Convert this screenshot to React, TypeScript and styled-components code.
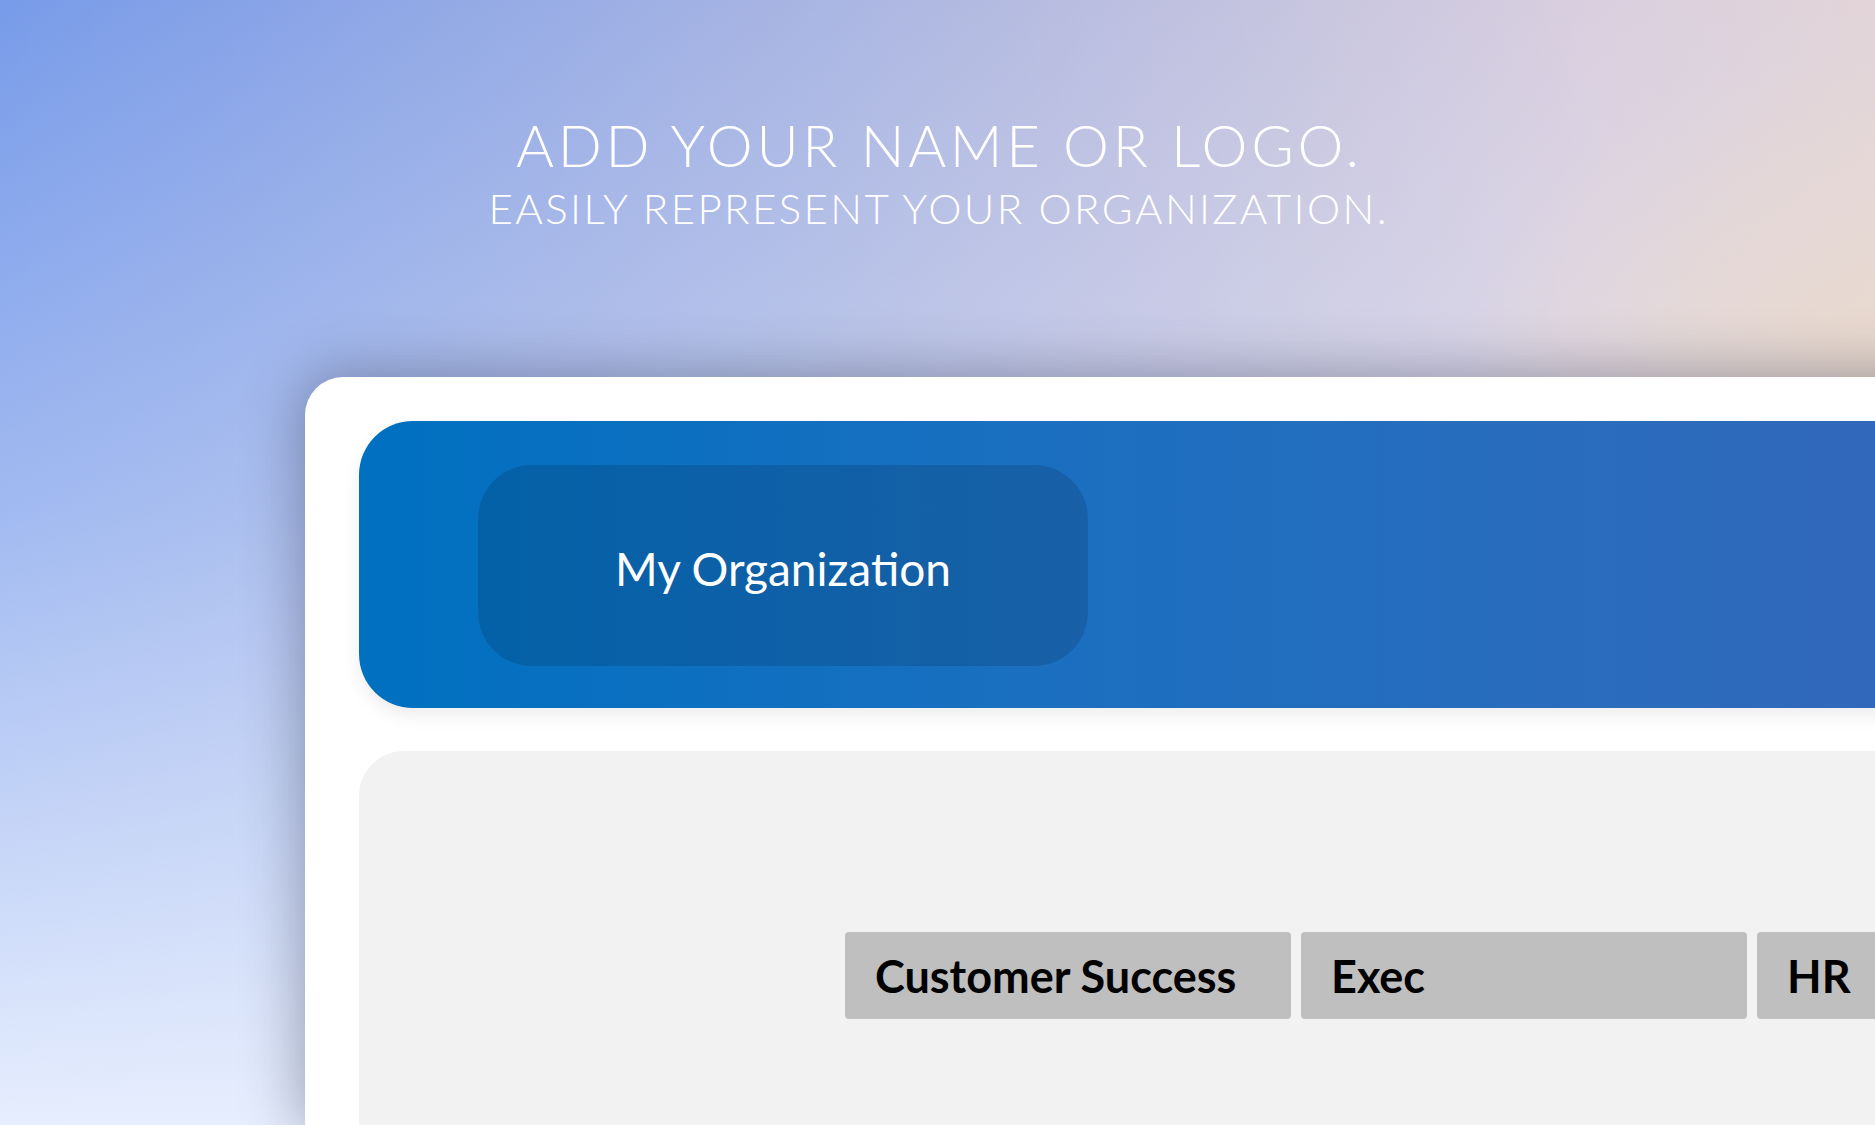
import React from "react";
import styled, { createGlobalStyle } from "styled-components";

const GlobalStyle = createGlobalStyle`
  html, body {
    margin: 0;
    padding: 0;
    overflow: hidden;
  }
  body {
    font-family: "Lato", "Liberation Sans", sans-serif;
  }
`;

const departments = ["Customer Success", "Exec", "HR"];

const App = () => {
  return (
    <>
      <GlobalStyle />
      <Page>
        <Heading>
          <Title>ADD YOUR NAME OR LOGO.</Title>
          <Subtitle>EASILY REPRESENT YOUR ORGANIZATION.</Subtitle>
        </Heading>
        <Card>
          <Banner>
            <OrgBox>
              <OrgName>My Organization</OrgName>
            </OrgBox>
          </Banner>
          <Panel>
            <TabRow>
              {departments.map(name => (
                <Tab key={name}>{name}</Tab>
              ))}
            </TabRow>
          </Panel>
        </Card>
      </Page>
    </>
  );
};

export default App;

const Page = styled.div`
  width: 1875px;
  height: 1125px;
  overflow: hidden;
  display: flex;
  flex-direction: column;
  background:
    radial-gradient(ellipse 420px 360px at 100% 36%, rgba(234, 216, 200, 0.9), rgba(234, 216, 200, 0) 100%),
    linear-gradient(to bottom, rgba(236, 242, 255, 0) 0%, rgba(236, 242, 255, 0.35) 45%, rgba(236, 242, 255, 0.95) 100%),
    linear-gradient(to right, #789be9 0%, #9fb0e4 35%, #bcbfe0 60%, #d9cfdf 85%, #e2d4d8 100%);
`;
const Heading = styled.div`
  padding-top: 110px;
  display: flex;
  flex-direction: column;
  align-items: center;
  color: #ffffff;
  font-family: "Lato", "Liberation Sans", sans-serif;
  font-weight: 300;
`;
const Title = styled.div`
  font-size: 58px;
  line-height: 70px;
  letter-spacing: 3.7px;
  margin-right: -3.7px;
`;
const Subtitle = styled.div`
  font-size: 42px;
  line-height: 56px;
  letter-spacing: 2.4px;
  margin-right: -2.4px;
`;
const Card = styled.div`
  margin-top: 141px;
  margin-left: 305px;
  width: 1700px;
  flex: 1;
  box-sizing: border-box;
  padding: 44px 0 0 54px;
  display: flex;
  flex-direction: column;
  gap: 43px;
  background: #ffffff;
  border-radius: 38px 0 0 0;
  box-shadow: 0 0 55px 6px rgba(45, 50, 75, 0.38);
`;
const Banner = styled.div`
  box-sizing: border-box;
  height: 287px;
  padding: 44px 0 0 119px;
  border-radius: 54px 0 0 54px;
  background: linear-gradient(to right, #0070c0 0%, #1a6fc0 40%, #2a6cbd 75%, #3566ba 100%);
  box-shadow: 0 8px 18px rgba(0, 0, 0, 0.07);
`;
const OrgBox = styled.div`
  width: 610px;
  height: 201px;
  border-radius: 54px;
  background: rgba(0, 0, 0, 0.13);
  display: flex;
  justify-content: center;
  align-items: center;
`;
const OrgName = styled.span`
  color: #ffffff;
  font-family: "Lato", "Open Sans", sans-serif;
  font-size: 46px;
  font-weight: 400;
  padding-top: 6px;
`;
const Panel = styled.div`
  flex: 1;
  box-sizing: border-box;
  padding: 181px 0 0 486px;
  background: #f2f2f2;
  border-radius: 45px 0 0 0;
`;
const TabRow = styled.div`
  display: flex;
  gap: 10px;
`;
const Tab = styled.div`
  width: 446px;
  height: 87px;
  flex-shrink: 0;
  box-sizing: border-box;
  padding-left: 30px;
  display: flex;
  align-items: center;
  background: #bfbfbf;
  border-radius: 4px;
  color: #000000;
  font-family: "Lato", "Liberation Sans", sans-serif;
  font-size: 45px;
  font-weight: 700;
`;
